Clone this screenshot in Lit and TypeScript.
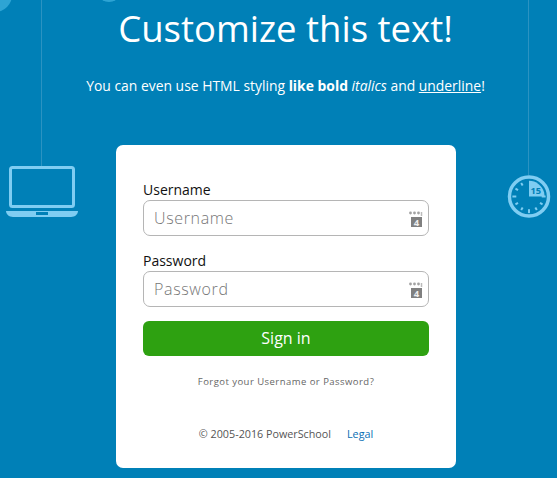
import { LitElement, css, html, svg } from 'lit';
import { customElement } from 'lit/decorators.js';

const ticks = [90, 120, 150, 180, 210, 240, 270, 300, 330];

@customElement('login-field')
export class LoginField extends LitElement {
  static override properties = {
    label: { type: String },
    type: { type: String },
  };

  label = '';
  type = 'text';

  static override styles = css`
    :host {
      display: block;
    }
    label {
      display: block;
      font-size: 14px;
      line-height: 19px;
      color: #111;
    }
    .box {
      display: flex;
      align-items: center;
      height: 34px;
      margin-top: 1px;
      padding: 0 0 0 10px;
      border: 1px solid #b5b5b5;
      border-radius: 7px;
      background: #fff;
    }
    input {
      flex: 1;
      min-width: 0;
      padding: 0 0 1px;
      border: 0;
      outline: 0;
      background: none;
      font-family: 'Open Sans', sans-serif;
      font-size: 16px;
      font-weight: 300;
      letter-spacing: 0.65px;
    }
    input::placeholder {
      color: #767676;
      opacity: 1;
    }
    svg {
      display: block;
      width: 14px;
      height: 17px;
      margin: 2px 5px 0 0;
    }
  `;

  override render() {
    return html`<label>${this.label}</label>
      <div class="box">
        <input type="${this.type}" placeholder="${this.label}" />
        <svg viewBox="0 0 14 17">
          <g fill="#a2a2a2">
            <circle cx="1.500" cy="2" r="1.400" />
            <circle cx="5.500" cy="2" r="1.400" />
            <circle cx="9.500" cy="2" r="1.400" />
          </g>
          <path d="M12.500 1v4" stroke="#bbb" stroke-width="1.500" />
          <rect x="2" y="6" width="11" height="10" fill="#808080" />
          <text x="7.500" y="14.500" text-anchor="middle" fill="#eee" font-family="Open Sans" font-weight="700" font-size="9.500">4</text>
        </svg>
      </div>`;
  }
}

@customElement('app-root')
export class AppRoot extends LitElement {
  static override styles = css`
    :host {
      display: block;
      position: relative;
      height: 478px;
      overflow: hidden;
      background: #0080b7;
      font-family: 'Open Sans', sans-serif;
      color: #fff;
    }
    .deco {
      position: absolute;
      display: block;
    }
    .string {
      position: absolute;
      top: 0;
      width: 1px;
      background: #2b93c2;
    }
    .laptop {
      left: 6px;
      top: 166px;
      width: 72px;
      height: 51px;
    }
    .clock {
      left: 507px;
      top: 175px;
      width: 44px;
      height: 43px;
    }
    .blob {
      position: absolute;
      border-radius: 50%;
      background: #2ea4d4;
    }
    .head {
      display: flex;
      flex-direction: column;
      align-items: center;
      position: relative;
      padding-left: 14px;
    }
    h1 {
      margin: 0;
      padding-top: 5px;
      font-size: 36.5px;
      line-height: 46px;
      font-weight: 400;
    }
    .sub {
      margin: 25px 0 0;
      font-size: 13.9px;
      line-height: 19px;
    }
    .card {
      position: relative;
      box-sizing: border-box;
      width: 340px;
      height: 323px;
      margin: 50px 0 0 116px;
      padding: 35px 27px 0;
      background: #fff;
      border-radius: 7px;
      color: #666;
    }
    .card login-field + login-field {
      margin-top: 15px;
    }
    button {
      display: block;
      width: 100%;
      height: 35px;
      margin-top: 14px;
      padding: 0 0 2px;
      border: 0;
      border-radius: 6px;
      background: #2ea111;
      color: #fff;
      font-family: inherit;
      font-size: 16px;
    }
    .forgot {
      margin-top: 19px;
      text-align: center;
      font-size: 9.5px;
      line-height: 14px;
      letter-spacing: 0.46px;
      color: #666;
    }
    .foot {
      display: flex;
      justify-content: center;
      gap: 16px;
      margin-top: 38px;
      font-size: 10.75px;
      line-height: 15px;
      color: #555;
    }
    .foot a {
      color: #0a6eb4;
      text-decoration: none;
    }
  `;

  override render() {
    return html`
      <div class="blob" style="left:-22px;top:-22px;width:34px;height:34px"></div>
      <div class="blob" style="left:100px;top:-10px;width:18px;height:12px"></div>
      <div class="string" style="left:41px;height:166px"></div>
      <div class="string" style="left:528px;height:175px"></div>
      <svg class="deco laptop" viewBox="0 0 72 51">
        <rect x="4.500" y="1.500" width="63" height="39" rx="2" fill="none" stroke="#7fcdf2" stroke-width="3" />
        <path d="M0 45h72c0 3-3 6-7 6H7c-4 0-7-3-7-6z" fill="#7fcdf2" />
        <rect x="30" y="46" width="12" height="3" fill="#0080b7" />
      </svg>
      <svg class="deco clock" viewBox="0 0 44 44">
        <circle cx="22" cy="22" r="20" fill="none" stroke="#7fcdf2" stroke-width="3.500" />
        <path d="M22 6a16 16 0 0 1 15.500 12L38 22H22z" fill="#7fcdf2" />
        ${ticks.map((a) =>
          svg`<rect x="21" y="${a % 90 === 0 ? 5 : 6}" width="2" height="${a % 90 === 0 ? 4 : 3}" fill="#7fcdf2" transform="rotate(${a} 22 22)" />`
        )}
        <text x="29" y="19.500" text-anchor="middle" fill="#0080b7" font-family="Open Sans" font-weight="700" font-size="9.500">15</text>
      </svg>
      <div class="head">
        <h1>Customize this text!</h1>
        <p class="sub">You can even use HTML styling <b>like bold</b> <i>italics</i> and <u>underline</u>!</p>
      </div>
      <div class="card">
        <login-field label="Username"></login-field>
        <login-field label="Password" type="password"></login-field>
        <button>Sign in</button>
        <div class="forgot">Forgot your Username or Password?</div>
        <div class="foot"><span>© 2005-2016 PowerSchool</span><a>Legal</a></div>
      </div>
    `;
  }
}
